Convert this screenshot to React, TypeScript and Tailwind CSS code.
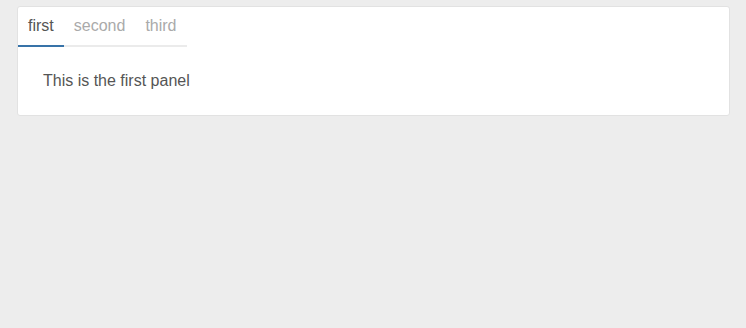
import { useState } from 'react';

const tabs = [
  { id: 'first', label: 'first', body: 'This is the first panel' },
  { id: 'second', label: 'second', body: 'This is the second panel' },
  { id: 'third', label: 'third', body: 'This is the third panel' },
];

export default function App() {
  const [active, setActive] = useState('first');
  const current = tabs.find((t) => t.id === active)!;

  return (
    <div
      className="min-h-screen bg-[#ededed] pl-[17px] pr-[16px] pt-[6px]"
      style={{ fontFamily: '"Liberation Sans", Arial, sans-serif' }}
    >
      <div className="rounded-[3px] border border-[#e2e2e2] bg-white">
        {/* Tab strip */}
        <div className="flex">
          <div className="flex border-b-2 border-[#ebebeb]">
            {tabs.map((t) => (
              <button
                key={t.id}
                onClick={() => setActive(t.id)}
                className={
                  active === t.id
                    ? '-mb-[2px] border-b-2 border-[#3873a8] px-[10px] pt-[7px] pb-[7px] text-[16px] leading-6 text-[#555]'
                    : '-mb-[2px] border-b-2 border-transparent px-[10px] pt-[7px] pb-[7px] text-[16px] leading-6 text-[#aaa]'
                }
              >
                {t.label}
              </button>
            ))}
          </div>
        </div>

        {/* Panel */}
        <div className="px-[25px] pt-[22px] pb-[22px] text-[16px] leading-6 text-[#555]">
          {current.body}
        </div>
      </div>
    </div>
  );
}
